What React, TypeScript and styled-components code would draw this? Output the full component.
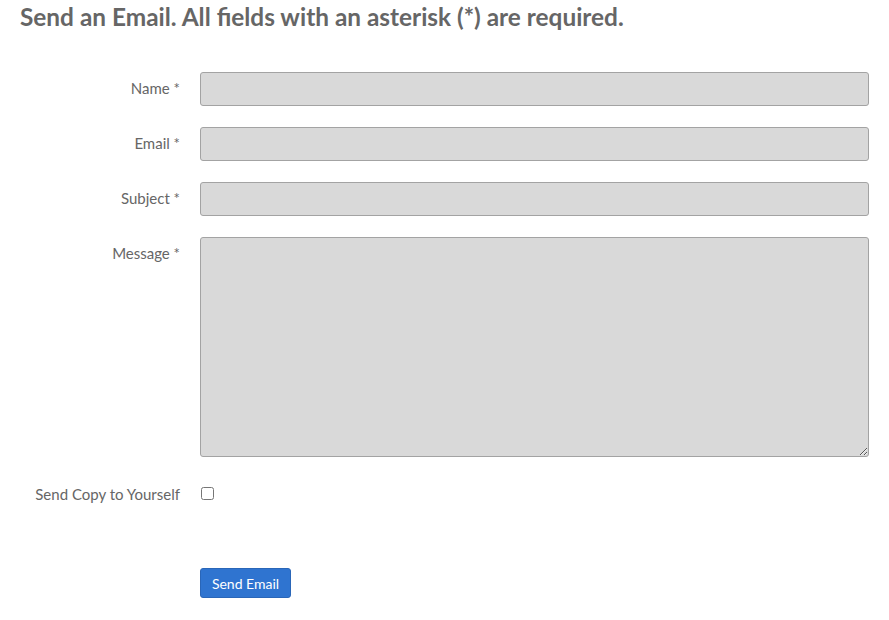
import styled, { createGlobalStyle } from 'styled-components';

const Global = createGlobalStyle`
  body {
    margin: 0;
    background: #fff;
    font-family: Lato, "Open Sans", sans-serif;
  }
`;

const Container = styled('div')`
  padding: 0 20px 0 20px;
`;

const Title = styled('h2')`
  margin: 0;
  padding-top: 3px;
  font-size: 24.4px;
  line-height: 28px;
  font-weight: 700;
  color: #666;
`;

const Form = styled('form')`
  display: grid;
  grid-template-columns: 160px 1fr;
  column-gap: 20px;
  row-gap: 21px;
  margin-top: 41px;
`;

const Label = styled('label')`
  font-size: 15px;
  color: #666;
  text-align: right;
  line-height: 33px;
  align-self: start;
  white-space: nowrap;
`;

const Input = styled('input')`
  box-sizing: border-box;
  height: 34px;
  width: 100%;
  margin: 0;
  background: #d9d9d9;
  border: 1px solid #a3a3a3;
  border-radius: 3px;
  font: inherit;
`;

const TextArea = styled('textarea')`
  box-sizing: border-box;
  height: 220px;
  width: 100%;
  margin: 0;
  background: #d9d9d9;
  border: 1px solid #a3a3a3;
  border-radius: 3px;
  font: inherit;
`;

const CheckRow = styled('div')`
  display: flex;
  align-items: center;
  height: 34px;
  margin-top: -2px;
`;

const Check = styled('input')`
  width: 13px;
  height: 13px;
  margin: 0 0 0 1px;
`;

const Button = styled('button')`
  grid-column: 2;
  justify-self: start;
  margin-top: 36px;
  height: 30px;
  width: 91px;
  padding: 0;
  background: #2f74d0;
  color: #fff;
  border: 1px solid #2a66b8;
  border-radius: 3px;
  font-family: Lato, "Open Sans", sans-serif;
  font-size: 14px;
`;

const fields = ['Name', 'Email', 'Subject'];

const App = () => (
  <Container>
    <Global />
    <Title>Send an Email. All fields with an asterisk (*) are required.</Title>
    <Form onSubmit={(e) => e.preventDefault()}>
      {fields.map((f) => [
        <Label key={f + '-label'}>{f} *</Label>,
        <Input key={f} type="text" />,
      ])}
      <Label>Message *</Label>
      <TextArea />
      <Label>Send Copy to Yourself</Label>
      <CheckRow>
        <Check type="checkbox" />
      </CheckRow>
      <Button type="submit">Send Email</Button>
    </Form>
  </Container>
);

export default App;
